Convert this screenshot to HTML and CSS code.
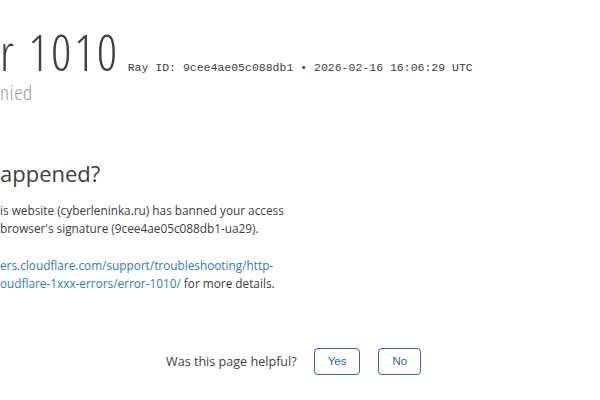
FILE: index.html
```html
<!DOCTYPE html>
<html lang="en">
<head>
<meta charset="utf-8">
<title>Access denied | cyberleninka.ru used Cloudflare to restrict access</title>
<link rel="stylesheet" href="styles.css">
</head>
<body>
<div class="page">
  <header class="headline">
    <h1 class="title">r 1010</h1>
    <small class="ray">Ray ID: 9cee4ae05c088db1 &bull; 2026-02-16 16:06:29 UTC</small>
  </header>
  <h2 class="subhead">nied</h2>

  <section class="details">
    <h2 class="section-title">appened?</h2>
    <p class="text">
      <span class="line">is website (cyberleninka.ru) has banned your access</span>
      <span class="line">browser's signature (9cee4ae05c088db1-ua29).</span>
    </p>
    <p class="text">
      <span class="line"><a class="link" href="#">ers.cloudflare.com/support/troubleshooting/http-</a></span>
      <span class="line"><a class="link" href="#">oudflare-1xxx-errors/error-1010/</a> for more details.</span>
    </p>
  </section>

  <footer class="feedback">
    <span class="question">Was this page helpful?</span>
    <button class="btn" type="button">Yes</button>
    <button class="btn" type="button">No</button>
  </footer>
</div>
</body>
</html>
```

FILE: styles.css
```css
html, body {
  margin: 0;
  padding: 0;
  background: #ffffff;
}

body {
  overflow: hidden;
  font-family: "Open Sans", "Noto Sans", sans-serif;
  color: #404040;
}

.page {
  width: 600px;
  height: 400px;
  padding-top: 24px;
  box-sizing: border-box;
}

.headline {
  display: flex;
  align-items: baseline;
  gap: 8px;
}

.title {
  margin: 0;
  font-size: 50px;
  line-height: 56px;
  font-weight: 300;
  font-stretch: 75%;
  letter-spacing: 2.5px;
  color: #404040;
}

.ray {
  font-family: "Liberation Mono", monospace;
  font-size: 11.5px;
  color: #404040;
  white-space: nowrap;
}

.subhead {
  margin: 0;
  font-size: 21px;
  line-height: 25px;
  font-weight: 300;
  font-stretch: 75%;
  letter-spacing: 0.6px;
  color: #9a9a9a;
}

.details {
  margin-top: 55px;
}

.section-title {
  margin: 0;
  font-size: 22px;
  line-height: 26px;
  font-weight: 400;
  color: #404040;
}

.text {
  margin: 15px 0 0;
  font-size: 11.8px;
  line-height: 18px;
  color: #404040;
}

.text + .text {
  margin-top: 19px;
}

.line {
  display: block;
  white-space: nowrap;
}

.link {
  color: #2f7bbf;
  text-decoration: none;
}

.feedback {
  display: flex;
  align-items: center;
  margin-top: 56px;
  padding-left: 166px;
}

.question {
  font-size: 12.6px;
  color: #404040;
  margin-right: 17px;
}

.btn {
  height: 27px;
  padding: 0 13px;
  margin-right: 18px;
  border: 1px solid #3d6796;
  border-radius: 4px;
  background: #ffffff;
  color: #2f5f9a;
  font-family: "Liberation Sans", Arial, sans-serif;
  font-size: 11.5px;
  line-height: 25px;
}
```
